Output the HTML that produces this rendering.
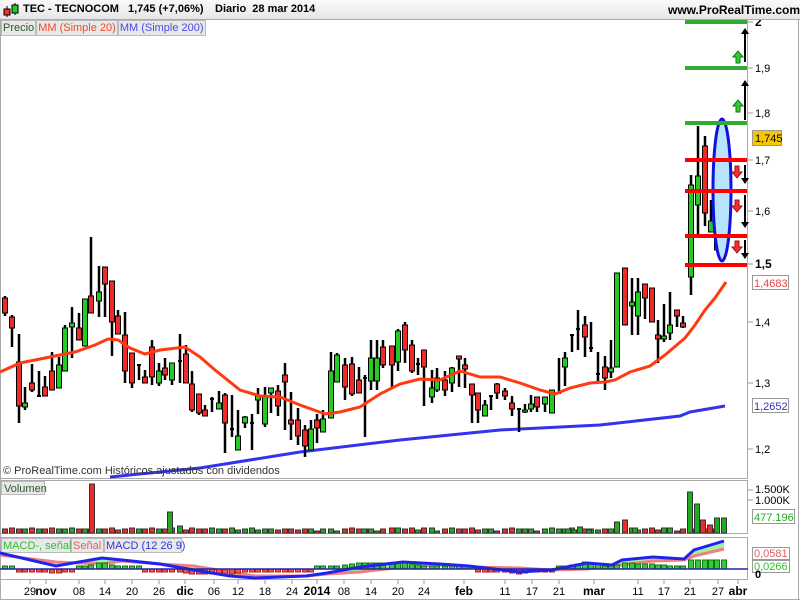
<!DOCTYPE html>
<html><head><meta charset="utf-8">
<style>
html,body{margin:0;padding:0;width:800px;height:600px;overflow:hidden;background:#fff;font-family:"Liberation Sans",sans-serif;}
#hdr{position:absolute;left:0;top:0;width:800px;height:19px;background:linear-gradient(#fafafa,#e6e6e6);border-bottom:1px solid #aaa;font-size:11px;font-weight:bold;}
#hdr span{position:absolute;top:3px;white-space:nowrap;}
#legs{position:absolute;top:20px;left:1px;display:flex;}
.leg{height:14px;background:#e8e8e8;border:1px solid #bbb;font-size:11px;line-height:14px;padding:0 1px;white-space:nowrap;}
svg{position:absolute;left:0;top:0;}
</style></head><body>
<svg id="s" width="800" height="600" xmlns="http://www.w3.org/2000/svg" font-family="Liberation Sans, sans-serif"></svg>
<div id="hdr">
<span style="left:2px;top:2px"><svg width="18" height="16" style="position:relative"><line x1="5" y1="4" x2="5" y2="15" stroke="#000"/><rect x="2" y="7" width="6" height="6" fill="#e33" stroke="#000"/><line x1="13" y1="1" x2="13" y2="13" stroke="#000"/><rect x="10" y="3" width="6" height="8" fill="#2c2" stroke="#000"/></svg></span>
<span style="left:23px">TEC - TECNOCOM</span>
<span style="left:128px">1,745 (+7,06%)</span>
<span style="left:215px">Diario&nbsp; 28 mar 2014</span>
<span style="left:668px;font-size:12px">www.ProRealTime.com</span>
</div>
<div id="legs"><div class="leg" style="color:#2a5a2a">Precio</div><div class="leg" style="color:#f04a2a">MM (Simple 20)</div><div class="leg" style="color:#4a4af0">MM (Simple 200)</div></div>
<script>
var s=document.getElementById('s'),h='';
function L(x1,y1,x2,y2,c,w){h+='<line x1="'+x1+'" y1="'+y1+'" x2="'+x2+'" y2="'+y2+'" stroke="'+c+'" stroke-width="'+(w||1)+'"/>';}
function R(x,y,w,hh,f,st){h+='<rect x="'+x+'" y="'+y+'" width="'+w+'" height="'+hh+'" fill="'+f+'"'+(st?' stroke="'+st+'"':'')+'/>';}
function T(x,y,t,c,sz,a,b){h+='<text x="'+x+'" y="'+y+'" fill="'+c+'" font-size="'+sz+'"'+(a?' text-anchor="'+a+'"':'')+(b?' font-weight="bold"':'')+'>'+t+'</text>';}
L(0.5,19,0.5,600,'#aaa');
L(747.5,19,747.5,478,'#aaa');L(0,478.5,748,478.5,'#aaa');
R(0.5,480.5,747,53,'none','#aaa');R(0.5,537.5,747,42,'none','#aaa');
L(0,599.5,800,599.5,'#aaa');L(798.5,19,798.5,600,'#aaa');
var P=[[22,'2',1],[68,'1,9'],[113,'1,8'],[160,'1,7'],[211,'1,6'],[264,'1,5',1],[322,'1,4'],[383,'1,3'],[449,'1,2']];
P.forEach(function(p){L(748,p[0],753,p[0],'#999');T(755,p[0]+4,p[1],'#000',p[2]?12:11,null,p[2]);});
var C=[[5,296,316,298,313,'r'],[12,315,347,317,328,'r'],[19,334,423,362,406,'r'],[25,387,410,403,407,'g'],[32,364,392,383,390,'r'],[39,371,397,395,397,'k'],[45,376,396,387,396,'r'],[52,352,390,371,390,'r'],[59,357,388,365,388,'g'],[65,325,371,328,371,'g'],[72,307,358,323,327,'g'],[79,313,340,328,340,'r'],[85,299,346,299,346,'g'],[91,237,313,296,313,'r'],[99,266,317,292,301,'g'],[105,267,317,267,284,'r'],[112,281,356,281,322,'r'],[118,310,334,316,334,'r'],[125,312,383,335,371,'r'],[132,353,388,353,383,'r'],[139,364,380,364,366,'k'],[145,370,383,377,383,'r'],[152,340,385,347,377,'r'],[159,363,386,371,383,'g'],[165,358,380,368,375,'r'],[172,363,385,363,380,'g'],[180,334,383,360,362,'k'],[186,345,383,354,383,'r'],[192,371,412,384,410,'r'],[199,394,415,394,413,'r'],[205,405,416,410,416,'r'],[212,397,412,398,400,'k'],[219,391,409,403,409,'g'],[225,393,453,395,423,'r'],[232,395,437,428,430,'k'],[238,410,450,436,450,'g'],[245,416,428,417,423,'g'],[252,414,450,422,424,'k'],[258,388,414,395,400,'g'],[265,387,427,396,424,'g'],[271,388,413,388,393,'g'],[278,385,416,391,406,'r'],[285,363,430,375,382,'r'],[291,392,440,420,424,'r'],[298,408,445,420,436,'r'],[305,425,457,430,446,'r'],[311,420,450,429,450,'g'],[317,414,443,420,428,'r'],[323,410,432,419,432,'g'],[331,352,418,371,418,'g'],[337,353,382,355,382,'g'],[345,358,400,365,387,'r'],[352,357,396,364,394,'r'],[359,367,393,380,393,'r'],[365,375,437,377,379,'k'],[371,340,390,358,381,'g'],[377,340,390,358,381,'g'],[383,340,368,347,365,'r'],[392,346,388,346,365,'r'],[398,329,371,331,362,'g'],[405,322,363,325,350,'r'],[412,340,373,345,371,'r'],[418,358,375,363,365,'k'],[424,350,406,350,367,'r'],[432,370,403,388,397,'g'],[437,368,392,378,390,'g'],[445,371,396,380,390,'r'],[452,367,392,368,383,'g'],[459,356,387,356,359,'r'],[465,358,388,365,369,'r'],[472,384,423,384,395,'r'],[478,393,423,393,410,'r'],[485,400,416,405,416,'g'],[491,395,410,395,410,'k'],[497,383,399,384,393,'r'],[505,388,400,391,396,'r'],[512,396,416,403,409,'r'],[519,408,432,408,410,'k'],[525,404,413,410,412,'g'],[531,395,412,404,409,'g'],[537,397,412,397,407,'r'],[545,397,412,397,404,'g'],[552,390,413,390,413,'g'],[559,358,394,392,394,'k'],[565,352,386,358,367,'g'],[572,334,352,334,336,'k'],[578,310,350,328,330,'k'],[585,316,357,325,337,'r'],[591,322,352,347,349,'k'],[598,352,383,373,375,'k'],[605,356,390,367,378,'r'],[611,340,378,368,372,'g'],[617,273,367,273,367,'g'],[625,268,325,268,325,'r'],[632,278,335,302,306,'g'],[638,278,335,292,316,'g'],[645,284,319,284,298,'r'],[652,288,322,288,322,'r'],[658,320,363,335,339,'r'],[664,304,342,336,339,'g'],[670,292,340,325,333,'g'],[677,310,327,310,316,'r'],[683,316,328,323,327,'r'],[691,175,295,185,277,'g'],[698,126,235,176,205,'g'],[705,136,226,146,213,'r'],[711,200,232,221,232,'g'],[717,178,250,186,250,'g'],[724,128,160,138,160,'g']];
var col={g:'#22cc22',r:'#ee2a2a',k:'#000'};
h+='<polyline fill="none" stroke="#3333ee" stroke-width="3" points="110,477 200,468 300,452 400,440 500,430 600,425 680,416 690,412 725,406"/>';
C.forEach(function(c){L(c[0],c[1],c[0],c[2],'#000',2.5);var bh=Math.max(2,c[4]-c[3]);if(c[5]=='k')R(c[0]-2,c[3],4,2,'#000');else R(c[0]-2.5,c[3],5,bh,col[c[5]],'#000');});
h+='<polyline fill="none" stroke="#ff3a10" stroke-width="3" points="0,372 20,363 50,357 75,352 95,345 108,339 118,340 130,348 145,354 160,350 185,347 200,357 215,370 240,390 260,396 280,397 300,405 325,414 340,412 360,407 380,394 400,384 420,379 440,380 460,371 480,377 500,377 520,383 540,390 555,394 570,388 590,383 605,382 615,380 630,372 650,366 665,355 685,338 695,325 705,310 715,298 726,282"/>';
h+='<ellipse cx="722" cy="190" rx="9" ry="71" fill="#b8e4fb" stroke="#1010e0" stroke-width="3"/>';
[22,68,123].forEach(function(y){L(685,y,747,y,'#33aa33',4);});
[160,191,236,265].forEach(function(y){L(685,y,747,y,'#ff0000',4);});
function up(x,y1,y2){L(x,y1,x,y2+4,'#000',2);h+='<polygon points="'+(x-4)+','+(y2+6)+' '+x+','+y2+' '+(x+4)+','+(y2+6)+'" fill="#000"/>';}
function dn(x,y1,y2){L(x,y1,x,y2-4,'#000',2);h+='<polygon points="'+(x-4)+','+(y2-6)+' '+x+','+y2+' '+(x+4)+','+(y2-6)+'" fill="#000"/>';}
up(745,62,28);up(745,120,80);dn(745,165,184);dn(745,195,228);dn(745,240,259);
function gup(x,y){h+='<polygon points="'+(x-5)+','+(y+6)+' '+x+','+y+' '+(x+5)+','+(y+6)+' '+(x+2)+','+(y+6)+' '+(x+2)+','+(y+12)+' '+(x-2)+','+(y+12)+' '+(x-2)+','+(y+6)+'" fill="#3c3" stroke="#171"/>';}
function rdn(x,y){h+='<polygon points="'+(x-2)+','+y+' '+(x+2)+','+y+' '+(x+2)+','+(y+6)+' '+(x+5)+','+(y+6)+' '+x+','+(y+12)+' '+(x-5)+','+(y+6)+' '+(x-2)+','+(y+6)+'" fill="#e33" stroke="#a11"/>';}
gup(738,51);gup(738,100);rdn(737,166);rdn(737,200);rdn(737,241);
R(752.5,130.5,29,15,'#f7c600','#999');T(755,142,'1,745','#000',11);
R(752.5,275.5,36,14,'#fff','#999');T(754,287,'1,4683','#f04040',11);
R(752.5,398.5,36,14,'#fff','#999');T(754,410,'1,2652','#3333aa',11);
T(3,474,'© ProRealTime.com  Históricos ajustados con dividendos','#333',11);
R(1.5,481.5,43,13,'#e8e8e8','#bbb');T(4,492,'Volumen','#2a5a2a',11);
var V={92:484,170:512,690:492,697:504,703:520,710:525,717:518,724:518,617:522,625:520,580:527,364:529,398:528,568:529,574:530,589:530,635:528};
C.forEach(function(c){var xx=c[0];if(V.hasOwnProperty(String(xx)))return;var top=528+((xx*7)%4);if(xx%5==0)top-=2;R(xx-2.5,top,5,533-top,c[5]=='r'?'#ee2a2a':'#22aa22','#333');});
Object.keys(V).forEach(function(k){var xx=+k;R(xx-2.5,V[k],5,533-V[k],(xx==92||xx==625||xx==703||xx==710)?'#ee2a2a':'#22aa22','#333');});
L(748,490,753,490,'#999');T(755,493,'1.500K','#000',11);L(748,500,753,500,'#999');T(755,504,'1.000K','#000',11);
R(752.5,509.5,42,14,'#fff','#999');T(754,521,'477.196','#22aa22',11);
R(1.5,538.5,69,14,'#e8e8e8','#bbb');T(3,549,'MACD-, señal','#33bb33',11);
R(71.5,538.5,32,14,'#e8e8e8','#bbb');T(73,549,'Señal','#e06060',11);
R(104.5,538.5,77,14,'#e8e8e8','#bbb');T(106,549,'MACD (12 26 9)','#3333dd',11);
var B=[[0,553],[56,566],[102,558],[122,560],[160,564],[194,570],[230,576],[255,578],[306,576],[327,573],[360,567],[403,562],[440,564],[469,566],[520,572],[551,570],[587,563],[612,565],[622,560],[653,557],[684,559],[694,550],[724,541]];
var S=B.map(function(p,i){var q=B[Math.max(0,i-1)];return [p[0],Math.round((p[1]*0.5+q[1]*0.5+ (p[1]<569?2:-1))) ];});
S[S.length-1][1]=549;S[S.length-2][1]=556;
h+='<polygon fill="#88ee88" opacity="0.8" points="'+B.map(function(p){return p.join(',')}).join(' ')+' '+S.slice().reverse().map(function(p){return p.join(',')}).join(' ')+'"/>';
h+='<polyline fill="none" stroke="#f08080" stroke-width="3" points="'+S.map(function(p){return p.join(',')}).join(' ')+'"/>';
C.forEach(function(c){var xx=c[0];var b=0;for(var k=1;k<B.length;k++)if(B[k][0]>=xx){var t=(xx-B[k-1][0])/(B[k][0]-B[k-1][0]);b=B[k-1][1]+t*(B[k][1]-B[k-1][1]);break;}
var sg=0;for(var k=1;k<S.length;k++)if(S[k][0]>=xx){var t=(xx-S[k-1][0])/(S[k][0]-S[k-1][0]);sg=S[k-1][1]+t*(S[k][1]-S[k-1][1]);break;}
var d=Math.round((sg-b)*1.2);if(d>0&&d<3)d=3;if(d<=0&&d>-3)d=-3;if(xx>685)d=9;if(d>0)R(xx-2.5,569-d,5,d,'#33cc33','#171');else R(xx-2.5,569,5,-d,'#ee5555','#a22');});
h+='<polyline fill="none" stroke="#2222ee" stroke-width="3" points="'+B.map(function(p){return p.join(',')}).join(' ')+'"/>';
L(0,569,748,569,'#2222aa',1.5);
R(752.5,547.5,37,12,'#fff','#999');T(754,557,'0,0581','#e06060',11);
R(752.5,560.5,37,12,'#fff','#999');T(754,570,'0,0266','#33bb33',11);T(755,578,'0','#000',11,null,1);
var D=[[30,'29'],[46,'nov',1],[79,'08'],[105,'14'],[132,'20'],[159,'26'],[185,'dic',1],[214,'06'],[238,'12'],[265,'18'],[292,'24'],[317,'2014',1],[344,'08'],[371,'14'],[398,'20'],[424,'24'],[464,'feb',1],[505,'11'],[532,'17'],[559,'21'],[594,'mar',1],[638,'11'],[664,'17'],[690,'21'],[718,'27'],[738,'abr',1]];
D.forEach(function(d){L(d[0],580,d[0],584,'#999');T(d[0],595,d[1],'#000',d[2]?12:11,'middle',d[2]);});
s.innerHTML=h;
</script>
</body></html>
